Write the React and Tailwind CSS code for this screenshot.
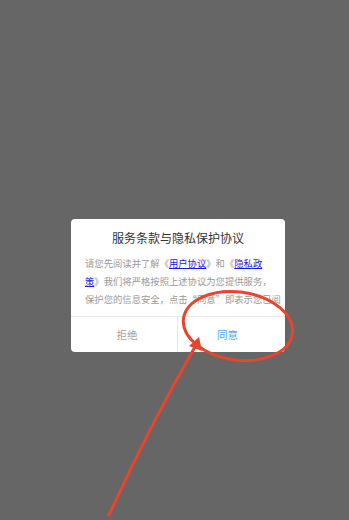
export default function App() {
  return (
    <div className="relative w-[349px] h-[520px] bg-[#666666] overflow-hidden pt-[219px] pl-[71px] font-['Noto_Sans_CJK_SC','Liberation_Sans',sans-serif]">
      {/* Dialog */}
      <div className="w-[214px] bg-white rounded-[4px] overflow-hidden">
        <div className="pt-[10px] pl-[14px] pr-[4px]">
          <h2 className="text-center pr-[10px] text-[12px] leading-[18px] text-[#333333] font-normal">服务条款与隐私保护协议</h2>
          <div className="mt-[7px] h-[54px] overflow-hidden text-[9.33px] leading-[18px] text-[#9a9a9a] whitespace-nowrap">
            <div>
              请您先阅读并了解《<span className="text-[#1a1ae6] underline">用户协议</span>》和《<span className="text-[#1a1ae6] underline">隐私政</span>
            </div>
            <div>
              <span className="text-[#1a1ae6] underline">策</span>》我们将严格按照上述协议为您提供服务，
            </div>
            <div>保护您的信息安全，点击“同意”即表示您已阅</div>
          </div>
          <div className="h-[8px]" />
        </div>
        <div className="grid grid-cols-[107px_1fr] border-t border-[#e8e8e8] h-[36px]">
          <button className="flex items-center justify-center pl-[6px] border-r border-[#e8e8e8] text-[10.5px] text-[#a3a3a3]">
            拒绝
          </button>
          <button className="flex items-center justify-center pr-[8px] text-[10.5px] text-[#4aa8f4]">
            同意
          </button>
        </div>
      </div>

      {/* red annotation */}
      <svg className="absolute inset-0 pointer-events-none" width="349" height="520" viewBox="0 0 349 520">
        <ellipse cx="238" cy="326" rx="55" ry="34" transform="rotate(8 238 326)" fill="none" stroke="#e8442e" strokeWidth="3" />
        <path d="M109 515 Q 150 425 196 345" fill="none" stroke="#e8442e" strokeWidth="3" strokeLinecap="round" />
        <polygon points="199,337 202,351 189,346" fill="#e8442e" />
      </svg>
    </div>
  )
}
